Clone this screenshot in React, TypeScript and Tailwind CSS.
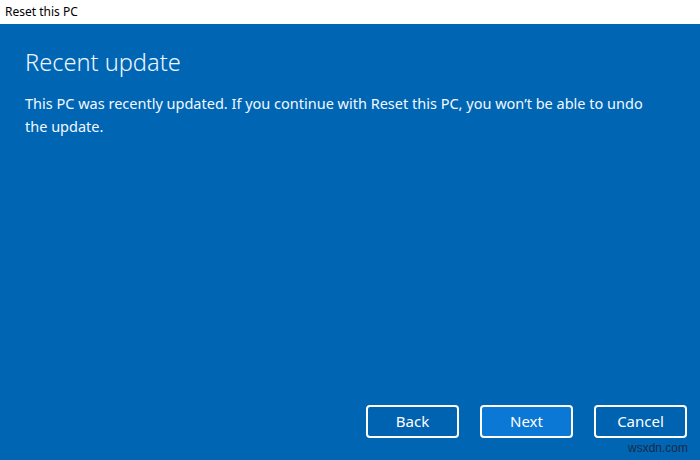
export default function App() {
  return (
    <div className="relative flex h-[460px] w-[700px] flex-col overflow-hidden font-['Noto_Sans',sans-serif]">
      {/* Window title bar */}
      <div className="flex h-[24px] items-center bg-white pl-[5px] text-[12px] text-black">
        Reset this PC
      </div>

      {/* Dialog body */}
      <div className="flex flex-1 flex-col bg-[#0066b4] pl-[25px] pr-[13px] text-white">
        <h1 className="mt-[22px] text-[23.6px] font-light leading-[32px] text-[#eef6ff]">Recent update</h1>
        <p className="mt-[14px] w-[640px] text-[14.5px] leading-[23px] text-[#f2f8ff]">
          This PC was recently updated. If you continue with Reset this PC, you won’t be able to undo the update.
        </p>

        <div className="mt-auto mb-[22px] flex justify-end gap-[21px]">
          <button className="h-[33px] w-[93px] rounded-[4px] border-2 border-white bg-[#0063b1] text-[15px] text-white">
            Back
          </button>
          <button className="h-[33px] w-[93px] rounded-[4px] border-2 border-white bg-[#0a78d4] text-[15px] text-white">
            Next
          </button>
          <button className="h-[33px] w-[93px] rounded-[4px] border-2 border-white bg-[#0063b1] text-[15px] text-white">
            Cancel
          </button>
        </div>
      </div>

      {/* Watermark */}
      <span className="absolute bottom-[3px] right-[12px] font-['Liberation_Sans',sans-serif] text-[12px] text-[#1c2a44]">
        wsxdn.com
      </span>
    </div>
  );
}
